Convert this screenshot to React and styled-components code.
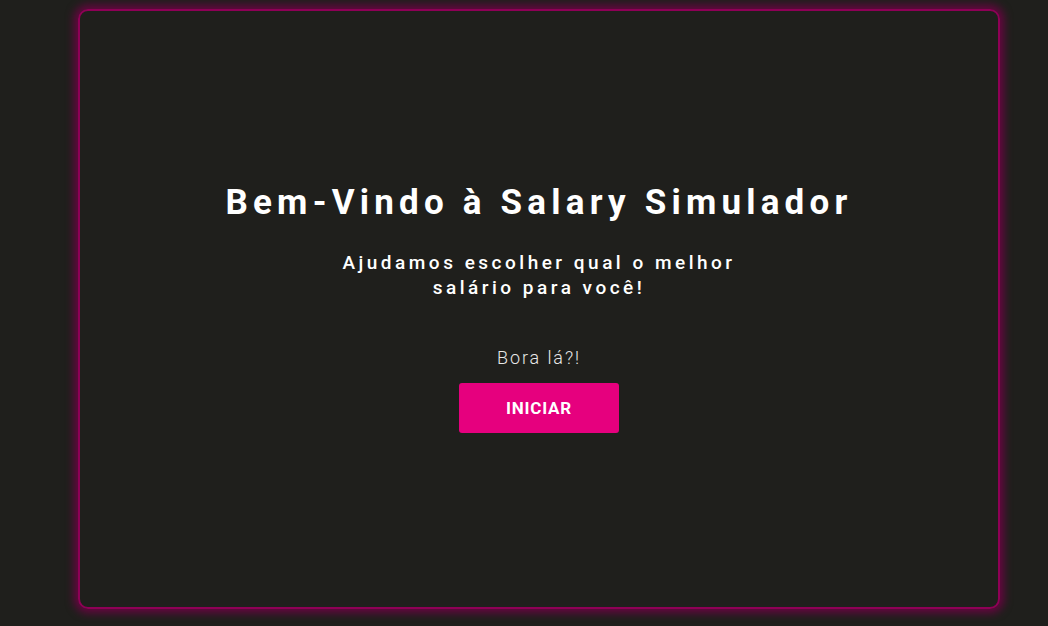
import React from 'react';
import styled, { createGlobalStyle } from 'styled-components';

const GlobalStyle = createGlobalStyle`
  html, body {
    margin: 0;
    padding: 0;
    background: #1f1f1c;
    font-family: Roboto, "Noto Sans", sans-serif;
    color: #fff;
  }
`;

const Page = styled.div`
  display: flex;
  justify-content: center;
  padding-top: 9px;
  height: 626px;
  box-sizing: border-box;
`;

const Card = styled.main`
  width: 922px;
  height: 600px;
  margin-left: 30px;
  box-sizing: border-box;
  border: 2px solid #8e0056;
  border-radius: 10px;
  box-shadow: 0 0 8px 4px rgba(115, 0, 70, 0.85);
  display: flex;
  flex-direction: column;
  align-items: center;
  padding-top: 171px;
`;

const Title = styled.h1`
  margin: 0;
  font-size: 35px;
  font-weight: 700;
  letter-spacing: 5.2px;
  line-height: 42px;
`;

const Subtitle = styled.h2`
  margin: 26px 0 0;
  width: 440px;
  text-align: center;
  font-size: 19px;
  font-weight: 500;
  letter-spacing: 3.5px;
  line-height: 25px;
`;

const Prompt = styled.p`
  margin: 46px 0 0;
  font-size: 18px;
  font-weight: 300;
  letter-spacing: 1.9px;
  color: #e8e8e8;
  line-height: 24px;
`;

const StartButton = styled.button`
  margin-top: 13px;
  width: 160px;
  height: 50px;
  border: none;
  border-radius: 3px;
  background: #e6007e;
  color: #fff;
  font-family: Roboto, sans-serif;
  font-size: 17px;
  font-weight: 700;
  letter-spacing: 0.8px;
  cursor: pointer;
`;

export default function App() {
  return (
    <>
      <GlobalStyle />
      <Page>
        <Card>
          <Title>Bem-Vindo à Salary Simulador</Title>
          <Subtitle>Ajudamos escolher qual o melhor salário para você!</Subtitle>
          <Prompt>Bora lá?!</Prompt>
          <StartButton>INICIAR</StartButton>
        </Card>
      </Page>
    </>
  );
}
